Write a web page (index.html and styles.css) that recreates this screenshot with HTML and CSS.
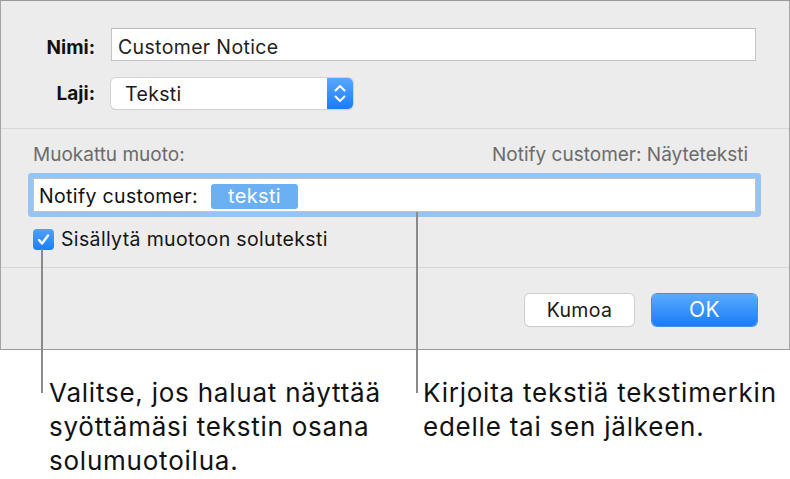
FILE: index.html
```html
<!DOCTYPE html>
<html lang="fi">
<head>
<meta charset="utf-8">
<title>Mukautettu muoto</title>
<link rel="stylesheet" href="styles.css">
</head>
<body>
<div class="page">
  <div class="dialog">
    <section class="top">
      <label class="lbl lbl-first">Nimi:</label>
      <div class="input">Customer Notice</div>
      <label class="lbl">Laji:</label>
      <div class="select">
        <span class="select-value">Teksti</span>
        <span class="stepper">
          <svg width="26" height="31" viewBox="0 0 26 31"><path d="M8.5 12.5 L13 8 L17.5 12.5 M8.5 18.5 L13 23 L17.5 18.5" fill="none" stroke="#fff" stroke-width="2" stroke-linecap="round" stroke-linejoin="round"/></svg>
        </span>
      </div>
    </section>
    <section class="format">
      <div class="format-head">
        <span>Muokattu muoto:</span>
        <span>Notify customer: Näyteteksti</span>
      </div>
      <div class="field">
        <span class="field-text">Notify customer:</span>
        <span class="token">teksti</span>
      </div>
      <div class="check-row">
        <span class="checkbox">
          <svg width="21" height="21" viewBox="0 0 21 21"><path d="M6 11 L9 14.5 L15 6.5" fill="none" stroke="#fff" stroke-width="2.4" stroke-linecap="round" stroke-linejoin="round"/></svg>
        </span>
        <span>Sisällytä muotoon soluteksti</span>
      </div>
    </section>
    <section class="actions">
      <button class="btn">Kumoa</button>
      <button class="btn primary">OK</button>
    </section>
  </div>
  <div class="callouts">
    <p class="note left">Valitse, jos haluat näyttää<br>syöttämäsi tekstin osana<br>solumuotoilua.</p>
    <p class="note right">Kirjoita tekstiä tekstimerkin<br>edelle tai sen jälkeen.</p>
  </div>
  <div class="leader leader-left"></div>
  <div class="leader leader-right"></div>
</div>
</body>
</html>
```

FILE: styles.css
```css
* { box-sizing: border-box; }
html, body { margin: 0; padding: 0; background: #fff; }
body {
  font-family: Inter, "Noto Sans", "Liberation Sans", sans-serif;
  color: #1b1b1b;
}
.page {
  position: relative;
  width: 790px;
  height: 479px;
}
.dialog {
  width: 790px;
  height: 350px;
  background: #ececec;
  border: 1px solid #a4a4a4;
  border-top-color: #999;
  border-bottom-color: #9b9b9b;
  display: flex;
  flex-direction: column;
  font-size: 19.5px;
  letter-spacing: 0.35px;
  line-height: 22px;
}
.top {
  display: grid;
  grid-template-columns: 94px 1fr;
  column-gap: 16px;
  row-gap: 17px;
  align-items: center;
  padding: 27px 33px 19px 0;
  border-bottom: 1px solid #d6d6d6;
}
.lbl {
  font-weight: 700;
  font-size: 19px;
  letter-spacing: 0;
  text-align: right;
  color: #111;
}
.lbl-first { padding-top: 6px; }
.input {
  height: 33px;
  background: #fff;
  border: 1px solid #c4c4c4;
  border-top-color: #bdbdbd;
  padding: 5px 6px 0;
  display: flex;
  align-items: center;
  color: #222;
}
.select {
  width: 242px;
  height: 31px;
  background: #fff;
  border-radius: 5px;
  box-shadow: 0 0 0 1px #d3d3d3, 0 1px 1px rgba(0,0,0,0.12);
  display: flex;
  align-items: center;
  overflow: hidden;
}
.select-value {
  flex: 1;
  padding-left: 14px;
  color: #1a1a1a;
}
.stepper {
  width: 26px;
  height: 31px;
  background: linear-gradient(#57a8ff, #1a7cf8);
  display: flex;
}
.format {
  padding: 15px 33px 17px 32px;
  border-bottom: 1px solid #d6d6d6;
  display: flex;
  flex-direction: column;
}
.format-head {
  display: flex;
  justify-content: space-between;
  color: #6b6b6b;
  font-size: 19px;
  letter-spacing: 0;
  padding-right: 8px;
}
.field {
  margin-top: 12px;
  height: 34px;
  background: #fff;
  border: 1px solid #c2c2c2;
  border-radius: 1px;
  box-shadow: 0 0 0 5px #96c4f5;
  display: flex;
  align-items: center;
  padding: 2px 5px 0;
}
.field-text { color: #111; }
.token {
  margin-left: 13px;
  width: 87px;
  height: 25px;
  background: #6cb0f4;
  border-radius: 3px;
  color: #fff;
  font-size: 20px;
  display: flex;
  align-items: center;
  justify-content: center;
  line-height: 1;
}
.check-row {
  margin-top: 16px;
  display: flex;
  align-items: center;
  gap: 7px;
  color: #151515;
}
.checkbox {
  width: 21px;
  height: 21px;
  border-radius: 4px;
  background: linear-gradient(#4ea2ff, #1c7ef7);
  display: flex;
}
.actions {
  flex: 1;
  display: flex;
  justify-content: flex-end;
  align-items: flex-start;
  gap: 18px;
  padding: 26px 32px 0 0;
}
.btn {
  font: inherit;
  letter-spacing: 0.35px;
  height: 32px;
  border-radius: 5px;
  border: none;
  padding: 0;
  background: #fff;
  color: #1a1a1a;
  box-shadow: 0 0 0 1px #cfcfcf, 0 1px 1px rgba(0,0,0,0.12);
  width: 109px;
}
.btn.primary {
  width: 105px;
  color: #fff;
  font-size: 21px;
  background: linear-gradient(#5aabff, #1a7bf7);
  box-shadow: 0 0 0 1px #3f8ff0;
}
.callouts {
  display: flex;
  margin-top: 26px;
}
.note {
  margin: 0;
  font-size: 26px;
  letter-spacing: 0.77px;
  line-height: 34px;
  color: #111;
}
.note.left { margin-left: 49px; width: 374px; }
.note.right { margin-left: 0; }
.leader {
  position: absolute;
  width: 2px;
  background: #8b8b8b;
}
.leader-left { left: 41px; top: 249px; height: 144px; }
.leader-right { left: 416px; top: 212px; height: 181px; }
```
